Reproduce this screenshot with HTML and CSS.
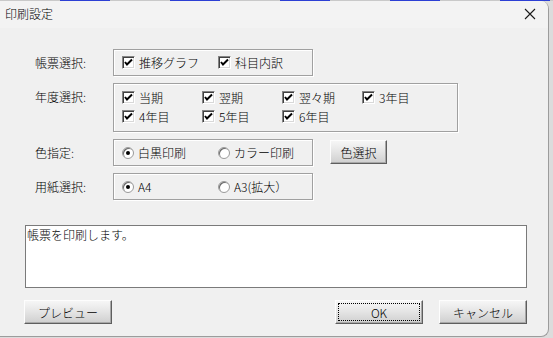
FILE: index.html
```html
<!DOCTYPE html>
<html lang="ja">
  <head>
    <meta charset="UTF-8" />
    <title>印刷設定</title>
    <link rel="stylesheet" href="styles.css">
  </head>
  <body>
    <div class="window">
      <!-- Title bar -->
      <div class="titlebar">
        <span class="title">印刷設定</span>
        <span class="close">
          <svg width="12" height="12" viewBox="0 0 12 12">
            <path d="M1 1 L11 11 M11 1 L1 11" stroke="#1a1a1a" stroke-width="1.1" fill="none" />
          </svg>
        </span>
      </div>

      <div class="content">
        <!-- 帳票選択 -->
        <div class="row">
          <div class="label">帳票選択:</div>
          <div class="group group-wide">
            <label class="item"><span class="check"><svg width="11" height="11" viewBox="0 0 11 11"><path d="M2 5 L4 7.5 L9 2.5" stroke="#000" stroke-width="2" fill="none" /></svg></span>推移グラフ</label>
            <label class="item"><span class="check"><svg width="11" height="11" viewBox="0 0 11 11"><path d="M2 5 L4 7.5 L9 2.5" stroke="#000" stroke-width="2" fill="none" /></svg></span>科目内訳</label>
          </div>
        </div>

        <!-- 年度選択 -->
        <div class="row">
          <div class="label">年度選択:</div>
          <div class="group group-years">
            <label class="item"><span class="check"><svg width="11" height="11" viewBox="0 0 11 11"><path d="M2 5 L4 7.5 L9 2.5" stroke="#000" stroke-width="2" fill="none" /></svg></span>当期</label>
            <label class="item"><span class="check"><svg width="11" height="11" viewBox="0 0 11 11"><path d="M2 5 L4 7.5 L9 2.5" stroke="#000" stroke-width="2" fill="none" /></svg></span>翌期</label>
            <label class="item"><span class="check"><svg width="11" height="11" viewBox="0 0 11 11"><path d="M2 5 L4 7.5 L9 2.5" stroke="#000" stroke-width="2" fill="none" /></svg></span>翌々期</label>
            <label class="item"><span class="check"><svg width="11" height="11" viewBox="0 0 11 11"><path d="M2 5 L4 7.5 L9 2.5" stroke="#000" stroke-width="2" fill="none" /></svg></span>3年目</label>
            <label class="item"><span class="check"><svg width="11" height="11" viewBox="0 0 11 11"><path d="M2 5 L4 7.5 L9 2.5" stroke="#000" stroke-width="2" fill="none" /></svg></span>4年目</label>
            <label class="item"><span class="check"><svg width="11" height="11" viewBox="0 0 11 11"><path d="M2 5 L4 7.5 L9 2.5" stroke="#000" stroke-width="2" fill="none" /></svg></span>5年目</label>
            <label class="item"><span class="check"><svg width="11" height="11" viewBox="0 0 11 11"><path d="M2 5 L4 7.5 L9 2.5" stroke="#000" stroke-width="2" fill="none" /></svg></span>6年目</label>
          </div>
        </div>

        <!-- 色指定 -->
        <div class="row">
          <div class="label">色指定:</div>
          <div class="group group-wide">
            <label class="item"><span class="radio on"></span>白黒印刷</label>
            <label class="item"><span class="radio"></span>カラー印刷</label>
          </div>
          <button class="btn btn-color">色選択</button>
        </div>

        <!-- 用紙選択 -->
        <div class="row">
          <div class="label">用紙選択:</div>
          <div class="group group-wide">
            <label class="item"><span class="radio on"></span>A4</label>
            <label class="item"><span class="radio"></span>A3(拡大）</label>
          </div>
        </div>

        <!-- Message -->
        <div class="message">帳票を印刷します。</div>

        <!-- Buttons -->
        <div class="actions">
          <button class="btn">プレビュー</button>
          <div class="actions-right">
            <button class="btn btn-default">OK</button>
            <button class="btn">キャンセル</button>
          </div>
        </div>
      </div>
    </div>
  </body>
</html>
```

FILE: styles.css
```css
body {
  margin: 0;
  width: 553px;
  height: 338px;
  overflow: hidden;
  font-family: "Noto Sans CJK JP", "Noto Sans", sans-serif;
  font-size: 12px;
  font-weight: 300;
  color: #000;
  background:
    repeating-linear-gradient(90deg, #c9c9c9 0 60px, #2c3fd4 60px 110px) top / 100% 1px no-repeat,
    #dcdcdc;
}

.window {
  box-sizing: border-box;
  margin-top: 1px;
  width: 549px;
  height: 336px;
  background: #f0f0f0;
  border-right: 1px solid #9c9c9c;
  border-bottom: 1px solid #9c9c9c;
  border-radius: 0 8px 8px 0;
  overflow: hidden;
}

.titlebar {
  height: 27px;
  background: #f3f3f3;
  display: flex;
  align-items: center;
  justify-content: space-between;
  padding: 0 6px 0 5px;
}

.title {
  line-height: 14px;
  margin-top: -1px;
}

.close {
  display: flex;
  width: 24px;
  justify-content: center;
  margin-top: -2px;
}

.content {
  padding: 21px 21px 0 24px;
  display: flex;
  flex-direction: column;
  gap: 7px;
}

.row {
  display: flex;
  align-items: flex-start;
  padding-left: 11px;
}

.label {
  width: 78px;
  line-height: 27px;
}

.group {
  box-sizing: border-box;
  border: 1px solid #a0a0a0;
  box-shadow: inset 1px 1px #fff, 1px 1px #fff;
  padding: 0 0 0 8px;
  display: grid;
  align-items: center;
}

.group-wide {
  width: 200px;
  height: 27px;
  grid-template-columns: 96px 96px;
}

.group-years {
  width: 345px;
  height: 49px;
  padding-top: 4px;
  align-content: start;
  grid-template-columns: repeat(4, 80px);
  grid-auto-rows: 19px;
}

.item {
  display: flex;
  align-items: center;
  gap: 4px;
  white-space: nowrap;
  line-height: 14px;
}

.check {
  box-sizing: border-box;
  width: 13px;
  height: 13px;
  background: #fff;
  border: 1px solid;
  border-color: #848484 #fff #fff #848484;
  box-shadow: inset 1px 1px #404040, inset -1px -1px #d8d8d8;
  display: flex;
  align-items: center;
  justify-content: center;
}

.radio {
  box-sizing: border-box;
  width: 12px;
  height: 12px;
  border-radius: 50%;
  background: #fff;
  border: 1px solid #9a9a9a;
  box-shadow: inset 1px 1px #6a6a6a;
  position: relative;
}

.radio.on::after {
  content: "";
  position: absolute;
  left: 3px;
  top: 3px;
  width: 4px;
  height: 4px;
  border-radius: 50%;
  background: #000;
}

.btn {
  box-sizing: border-box;
  font-family: inherit;
  font-size: 12px;
  font-weight: 300;
  color: #000;
  width: 88px;
  height: 24px;
  padding: 0;
  border: 1px solid;
  border-color: #fdfdfd #5e5e5e #5e5e5e #fdfdfd;
  box-shadow: inset -1px -1px #a8a8a8;
  background: linear-gradient(#f6f6f6, #e6e6e6 45%, #cfcfcf);
}

.btn-color {
  width: 57px;
  margin: 1px 0 0 17px;
}

.btn-default {
  outline: 1px dotted #000;
  outline-offset: -4px;
}

.message {
  box-sizing: border-box;
  width: 502px;
  height: 63px;
  margin: 18px 0 0 1px;
  background: #fff;
  border: 1px solid #7a7a7a;
  padding: 2px 1px;
  line-height: 14px;
}

.actions {
  margin-top: 5px;
  display: flex;
  justify-content: space-between;
}

.actions-right {
  display: flex;
  gap: 16px;
}
```
